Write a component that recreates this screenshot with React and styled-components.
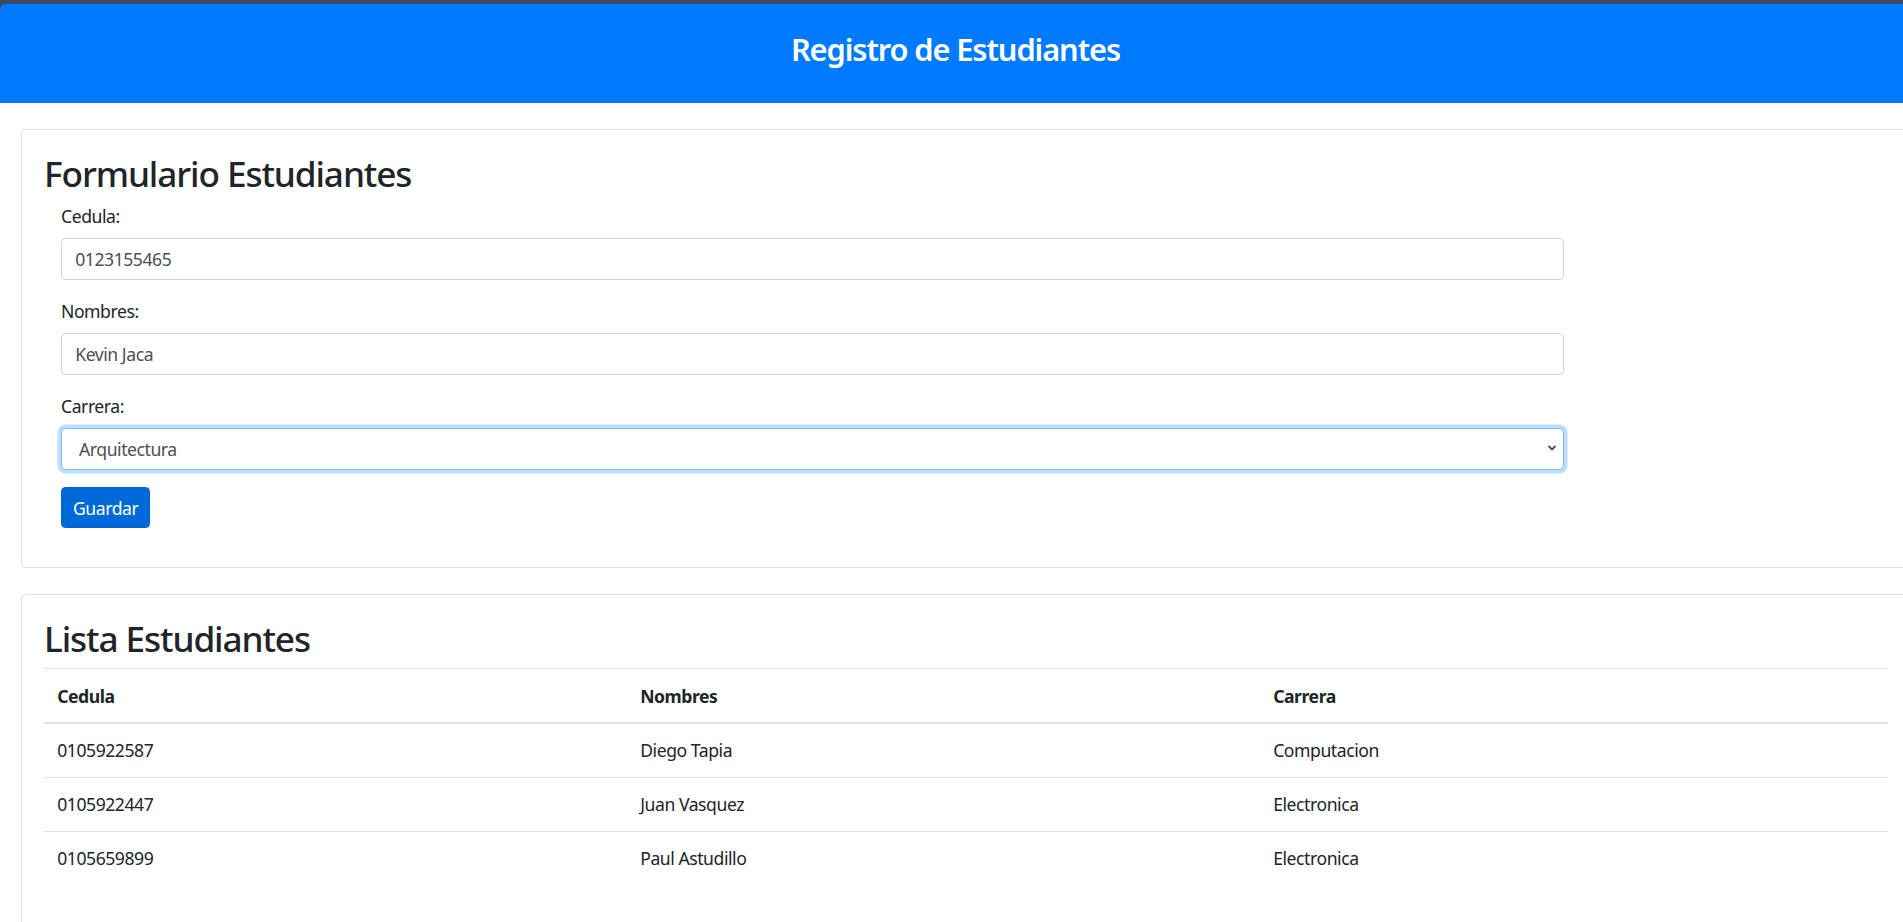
import React from "react";
import styled, { createGlobalStyle } from "styled-components";

const GlobalStyle = createGlobalStyle`
  body {
    margin: 0;
    background: #fff;
    overflow-x: hidden;
    font-family: "Noto Sans", "Open Sans", sans-serif;
    font-size: 17.6px;
    line-height: 1.5;
    letter-spacing: -0.45px;
    color: #212529;
  }
  * { box-sizing: border-box; }
`;

const Frame = styled.div`
  background: #3d4b5f;
  padding-top: 4px;
`;

const Header = styled.header`
  background: #007bff;
  border-top-left-radius: 6px;
  height: 99px;
  display: flex;
  align-items: center;
  justify-content: center;
  padding: 0 0 8px 8px;
`;

const HeaderTitle = styled.h3`
  margin: 0;
  color: #fff;
  font-size: 30.8px;
  font-weight: 600;
  line-height: 1.2;
  letter-spacing: -1.1px;
`;

const Main = styled.main`
  display: flex;
  flex-direction: column;
  gap: 26px;
  padding: 26px 0 0 21px;
`;

const Card = styled.section`
  width: 1890px;
  border: 1px solid rgba(0, 0, 0, 0.125);
  border-radius: 4.4px;
  padding: 22px;
  min-height: ${(p) => p.minHeight || 0}px;
`;

const CardTitle = styled.h2`
  margin: 0 0 8.8px;
  font-size: 35.2px;
  font-weight: 500;
  line-height: 1.2;
  letter-spacing: -1.1px;
`;

const Form = styled.form`
  width: 1520px;
  padding: 0 0 17px 17px;
`;

const Group = styled.div`
  margin-bottom: 17.6px;
`;

const Label = styled.label`
  display: block;
  margin-bottom: 8.8px;
  line-height: 26.4px;
`;

const Input = styled.input`
  display: block;
  width: 100%;
  height: 42px;
  padding: 0 13.2px;
  font: inherit;
  letter-spacing: inherit;
  color: #495057;
  background: #fff;
  border: 1px solid #ced4da;
  border-radius: 4.4px;
  outline: none;
`;

const SelectWrap = styled.div`
  position: relative;
`;

const Select = styled.select`
  display: block;
  width: 100%;
  height: 42px;
  padding: 0 13.2px 0 17px;
  font: inherit;
  letter-spacing: inherit;
  color: #495057;
  background: #fff;
  border: 1px solid #80bdff;
  border-radius: 4.4px;
  box-shadow: 0 0 0 3.5px rgba(0, 123, 255, 0.25);
  outline: none;
  appearance: none;
`;

const Caret = styled.svg`
  position: absolute;
  right: 7px;
  top: 16px;
  pointer-events: none;
`;

const Button = styled.button`
  height: 41px;
  padding: 0 11px;
  font: inherit;
  letter-spacing: inherit;
  color: #fff;
  background: #0069d9;
  border: 1px solid #0062cc;
  border-radius: 4.4px;
`;

const Table = styled.table`
  width: 100%;
  border-collapse: collapse;
  table-layout: fixed;
`;

const Th = styled.th`
  width: ${(p) => (p.w ? `${p.w}px` : "auto")};
  text-align: left;
  font-weight: 700;
  padding: 13.2px;
  line-height: 26.4px;
  border-top: 1px solid #dee2e6;
  border-bottom: 2px solid #dee2e6;
`;

const Td = styled.td`
  padding: 13.2px;
  line-height: 26.4px;
  border-top: 1px solid #dee2e6;
`;

const Row = styled.tr`
  &:first-child td {
    border-top: none;
  }
`;

const students = [
  { cedula: "0105922587", nombres: "Diego Tapia", carrera: "Computacion" },
  { cedula: "0105922447", nombres: "Juan Vasquez", carrera: "Electronica" },
  { cedula: "0105659899", nombres: "Paul Astudillo", carrera: "Electronica" },
];

export default function App() {
  return (
    <>
      <GlobalStyle />
      <Frame>
        <Header>
          <HeaderTitle>Registro de Estudiantes</HeaderTitle>
        </Header>
      </Frame>
      <Main>
        <Card>
          <CardTitle>Formulario Estudiantes</CardTitle>
          <Form onSubmit={(e) => e.preventDefault()}>
            <Group>
              <Label>Cedula:</Label>
              <Input defaultValue="0123155465" />
            </Group>
            <Group>
              <Label>Nombres:</Label>
              <Input defaultValue="Kevin Jaca" />
            </Group>
            <Group>
              <Label>Carrera:</Label>
              <SelectWrap>
                <Select defaultValue="Arquitectura">
                  <option>Arquitectura</option>
                  <option>Computacion</option>
                  <option>Electronica</option>
                </Select>
                <Caret width="10" height="8" viewBox="0 0 10 8">
                  <path d="M1.5 2 L5 5.5 L8.5 2" fill="none" stroke="#4a4f57" strokeWidth="1.8" />
                </Caret>
              </SelectWrap>
            </Group>
            <Button type="submit">Guardar</Button>
          </Form>
        </Card>
        <Card minHeight={400}>
          <CardTitle>Lista Estudiantes</CardTitle>
          <Table>
            <thead>
              <tr>
                <Th w={583}>Cedula</Th>
                <Th w={633}>Nombres</Th>
                <Th>Carrera</Th>
              </tr>
            </thead>
            <tbody>
              {students.map((s) => (
                <Row key={s.cedula}>
                  <Td>{s.cedula}</Td>
                  <Td>{s.nombres}</Td>
                  <Td>{s.carrera}</Td>
                </Row>
              ))}
            </tbody>
          </Table>
        </Card>
      </Main>
    </>
  );
}
